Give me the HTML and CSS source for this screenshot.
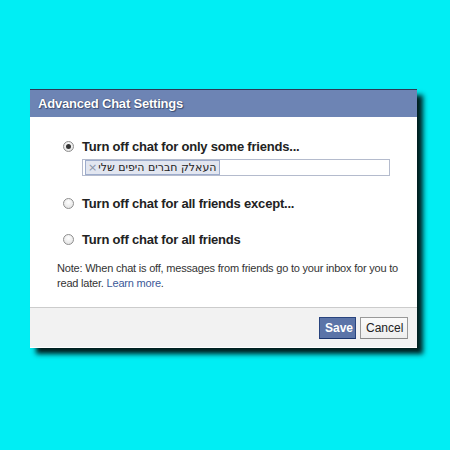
FILE: index.html
```html
<!DOCTYPE html>
<html>
<head>
<meta charset="utf-8">
<link rel="stylesheet" href="styles.css">
</head>
<body>
<div class="page">
  <div class="dialog">
    <div class="header">Advanced Chat Settings</div>
    <div class="content">
      <div class="option">
        <span class="radio checked"></span>
        <span class="label">Turn off chat for only some friends...</span>
      </div>
      <div class="tokenbox">
        <span class="token"><span class="x">×</span><span dir="rtl">העאלק חברים היפים שלי</span></span>
      </div>
      <div class="option second">
        <span class="radio"></span>
        <span class="label">Turn off chat for all friends except...</span>
      </div>
      <div class="option third">
        <span class="radio"></span>
        <span class="label">Turn off chat for all friends</span>
      </div>
      <p class="note">Note: When chat is off, messages from friends go to your inbox for you to read later. <span class="link">Learn more</span>.</p>
    </div>
    <div class="footer">
      <button class="btn save">Save</button>
      <button class="btn cancel">Cancel</button>
    </div>
  </div>
</div>
</body>
</html>
```
FILE: styles.css
```css
html, body {
  margin: 0;
  padding: 0;
  background: #00eef4;
}
.page {
  width: 450px;
  height: 450px;
  padding: 89px 0 0 30px;
  box-sizing: border-box;
}
.dialog {
  width: 387px;
  background: #fff;
  box-shadow: 6px 6px 5px rgba(0, 20, 20, 0.95);
  font-family: "Liberation Sans", Arial, sans-serif;
}
.header {
  height: 27px;
  background: #6d84b4;
  border-top: 1px solid #2c3a55;
  color: #fff;
  font-weight: bold;
  font-size: 13px;
  letter-spacing: -0.2px;
  line-height: 27px;
  padding-left: 8px;
  text-shadow: 0 0 1px #2d3d60, 1px 1px 1px #3b4d74;
}
.content {
  height: 191px;
  padding: 21px 0 0 28px;
  box-sizing: border-box;
  border-bottom: 1px solid #ccc;
}
.option {
  display: flex;
  align-items: center;
  height: 16px;
  padding-left: 5px;
}
.option.second { margin-top: 19px; }
.option.third { margin-top: 20px; }
.radio {
  width: 9px;
  height: 9px;
  border-radius: 50%;
  border: 1px solid #8e8e8e;
  background: radial-gradient(circle at 50% 35%, #fff, #ddd);
  box-sizing: content-box;
  position: relative;
  margin-right: 8px;
}
.radio.checked::after {
  content: "";
  position: absolute;
  left: 2px;
  top: 2px;
  width: 5px;
  height: 5px;
  border-radius: 50%;
  background: #333;
}
.label {
  font-weight: bold;
  font-size: 13px;
  letter-spacing: -0.2px;
  color: #222;
}
.tokenbox {
  margin: 5px 0 0 24px;
  width: 308px;
  height: 17px;
  border: 1px solid #b4bbcd;
  box-sizing: border-box;
  display: flex;
  align-items: center;
  padding-left: 2px;
}
.token {
  display: flex;
  align-items: center;
  height: 13px;
  border: 1px solid #9daccc;
  background: #e2e6f0;
  color: #222;
  padding: 0 2px;
  line-height: 13px;
  font-family: "DejaVu Sans", "Liberation Sans", sans-serif;
  font-size: 11px;
}
.token .x {
  color: #8a93a8;
  font-size: 11px;
  margin-right: 1px;
}
.note {
  margin: 14px 0 0 -1px;
  font-size: 11px;
  line-height: 15px;
  letter-spacing: -0.2px;
  color: #333;
  width: 345px;
}
.link {
  color: #3b5998;
}
.footer {
  height: 39px;
  background: #f2f2f2;
  display: flex;
  justify-content: flex-end;
  align-items: center;
  padding-right: 9px;
  gap: 4px;
  border-bottom: 1px solid #fff;
}
.btn {
  font-family: "Liberation Sans", Arial, sans-serif;
  font-weight: bold;
  font-size: 12px;
  height: 22px;
  padding: 0 5px;
  margin: 0;
  border: 1px solid;
}
.save {
  background: #5b74a8;
  border-color: #29447e #29447e #1a356e;
  color: #fff;
  width: 37px;
}
.cancel {
  border-color: #999 #999 #888;
  color: #222;
  font-weight: normal;
  width: 48px;
  background: linear-gradient(#fafafa, #eee);
}
```
